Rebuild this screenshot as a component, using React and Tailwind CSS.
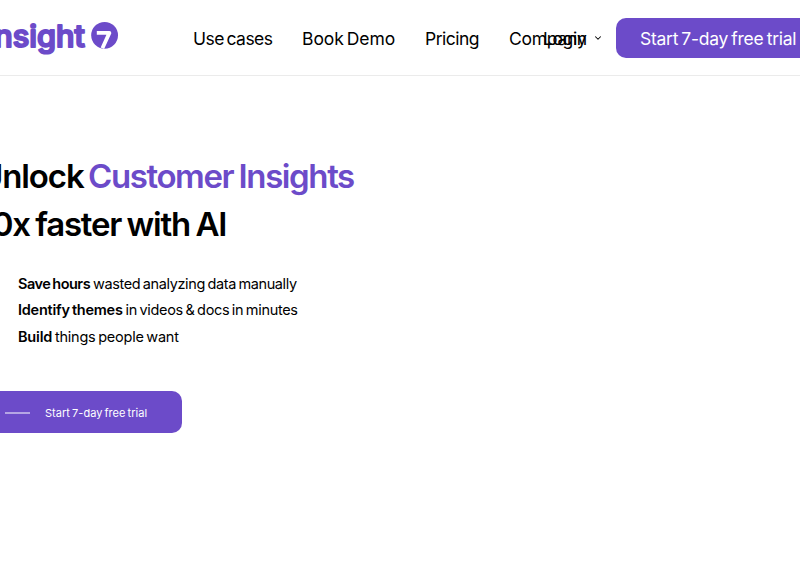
import { ChevronDown } from "lucide-react";

const navLinks = [
    { label: "Use cases", className: "w-[109px] tracking-[-0.5px]" },
    { label: "Book Demo", className: "w-[123px] tracking-[-0.05px]" },
    { label: "Pricing", className: "w-[84px] tracking-[-0.5px]" },
];

const benefits = [
    {
        lead: "Save hours",
        text: "wasted analyzing data manually",
        leadClass: "tracking-[-0.5px]",
        textClass: "tracking-[-0.38px]",
    },
    {
        lead: "Identify themes",
        text: "in videos & docs in minutes",
        leadClass: "tracking-[-0.24px]",
        textClass: "tracking-[-0.32px]",
    },
    {
        lead: "Build",
        text: "things people want",
        leadClass: "tracking-[-0.2px]",
        textClass: "tracking-[-0.23px]",
    },
];

const Logo = () => (
    <svg
        width="119"
        height="44"
        viewBox="0 0 119 44"
        className="shrink-0 text-[#6c4bc9]"
        role="img"
        aria-label="Insight7"
    >
        <text
            x="-14"
            y="30.5"
            textLength="99"
            lengthAdjust="spacingAndGlyphs"
            fill="currentColor"
            stroke="currentColor"
            strokeWidth="2"
            strokeLinejoin="round"
            className="font-['Inter'] text-[30px] font-medium"
        >
            Insight
        </text>
        <circle cx="104.6" cy="19.3" r="13.4" fill="currentColor" />
        <path
            d="M96.8 16.9h12.6l-7 15.4"
            fill="none"
            stroke="white"
            strokeWidth="3.8"
            strokeLinejoin="round"
        />
    </svg>
);

const Header = () => (
    <header className="flex h-[76px] items-center border-b border-[#ebebeb]">
        <div className="w-[193px] shrink-0">
            <Logo />
        </div>
        <nav className="flex shrink-0 items-center pt-0.5 text-[17.5px] leading-6 [word-spacing:-2px]">
            {navLinks.map((link) => (
                <a key={link.label} className={`shrink-0 ${link.className}`}>
                    {link.label}
                </a>
            ))}
            <a className="w-[34px] shrink-0 tracking-[-0.25px]">Company</a>
            <a className="w-[50px] shrink-0 tracking-[-0.4px]">Login</a>
            <ChevronDown size={10} strokeWidth={2.5} className="-mt-0.5" />
        </nav>
        <a className="mt-px ml-[13px] h-[40.5px] w-[210px] shrink-0 rounded-[10px] bg-[#6c4bc9] pl-6 text-[17.5px] leading-[41px] tracking-[-0.27px] text-white [word-spacing:-1.4px]">
            Start 7-day free trial
        </a>
    </header>
);

const Hero = () => (
    <main className="pt-[76px]">
        <h1 className="-ml-[21px] text-[33px] leading-[48px] font-semibold [word-spacing:-1.5px]">
            <span className="block">
                <span className="inline-block w-[109px] tracking-[-1.1px]">
                    Unlock
                </span>
                <span className="tracking-[-1.4px] text-[#6c4bc9]">
                    Customer Insights
                </span>
            </span>
            <span className="block tracking-[-1.25px]">10x faster with AI</span>
        </h1>
        <ul className="mt-[23px] ml-[18px] text-[14.5px] leading-[26.4px] [word-spacing:-1.2px]">
            {benefits.map((item) => (
                <li key={item.lead}>
                    <strong className={`font-semibold ${item.leadClass}`}>
                        {item.lead}
                    </strong>{" "}
                    <span className={item.textClass}>{item.text}</span>
                </li>
            ))}
        </ul>
        <a className="mt-[41px] -ml-5 flex h-[42px] w-[202px] items-center rounded-[10px] bg-[#6c4bc9] pt-px pl-[25px] text-[11px] text-white">
            <span className="mt-px h-0.5 w-[25px] bg-[#b5a5e4]" />
            <span className="ml-[15px] pt-px tracking-[0.04px] [word-spacing:-1.1px]">
                Start 7-day free trial
            </span>
        </a>
    </main>
);

const App = () => (
    <div className="h-[576px] w-full overflow-hidden bg-white font-['Inter',sans-serif] whitespace-nowrap text-black">
        <Header />
        <Hero />
    </div>
);

export default App;
